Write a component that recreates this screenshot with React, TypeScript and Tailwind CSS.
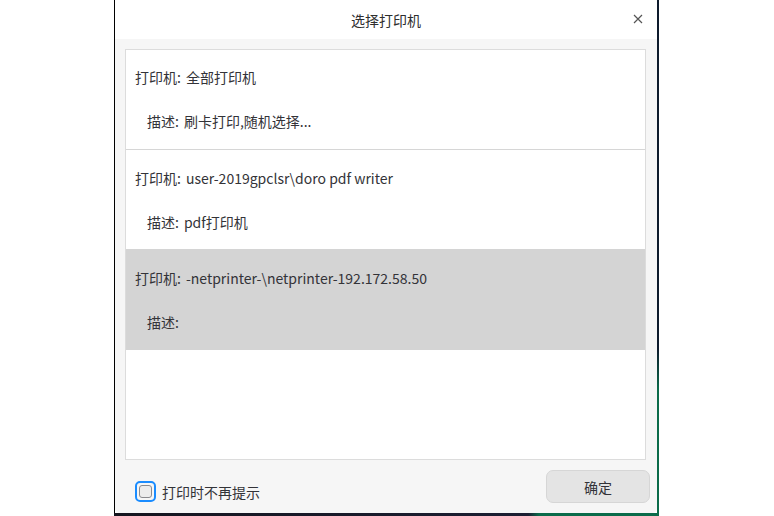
import React from "react";

const printers = [
  { name: "全部打印机", desc: "刷卡打印,随机选择..." },
  { name: "user-2019gpclsr\\doro pdf writer", desc: "pdf打印机" },
  { name: "-netprinter-\\netprinter-192.172.58.50", desc: "" },
];

export default function App() {
  const selected = 2;

  return (
    <div
      className="w-[774px] h-[516px] bg-white flex text-[14px] leading-[20px] text-[#333338]"
      style={{ fontFamily: '"Noto Sans CJK SC", "Noto Sans", sans-serif' }}
    >
      <div className="w-[114px] shrink-0" />

      {/* window frame */}
      <div className="w-[545px] h-full flex flex-col">
        <div className="flex flex-1 min-h-0">
          <div className="w-px bg-black" />

          {/* dialog */}
          <div className="flex-1 flex flex-col bg-[#f6f6f6] rounded-b-[5px] overflow-hidden">
            {/* TITLE */}
            <div className="h-[39px] bg-white flex items-center justify-center relative shrink-0">
              <span className="text-[#2e2e2e]">选择打印机</span>
              <button className="absolute right-[14px] top-[14px] w-[10px] h-[10px] flex items-center justify-center">
                <svg width="10" height="10" viewBox="0 0 10 10">
                  <path d="M1 1L9 9M9 1L1 9" stroke="#555" strokeWidth="1.2" />
                </svg>
              </button>
            </div>

            {/* LIST */}
            <div className="pt-[10px] pl-[10px] pr-[11px]">
              <div className="h-[411px] bg-white border border-[#dcdcdc] flex flex-col">
                {printers.map((p, i) => (
                  <div
                    key={i}
                    className={
                      i === selected
                        ? "h-[101px] bg-[#d4d4d4] pl-[9px] pt-[19px] flex flex-col gap-[24px]"
                        : i === 0
                        ? "h-[100px] border-b border-[#d6d6d6] pl-[9px] pt-[17px] flex flex-col gap-[24px]"
                        : "h-[99px] pl-[9px] pt-[18px] flex flex-col gap-[24px]"
                    }
                  >
                    <div className="flex">
                      <span>打印机:</span>
                      <span className="ml-[5px]">{p.name}</span>
                    </div>
                    <div className="flex pl-[12px]">
                      <span>描述:</span>
                      <span className="ml-[5px]">{p.desc}</span>
                    </div>
                  </div>
                ))}
              </div>
            </div>

            {/* FOOTER */}
            <div className="flex items-start justify-between pl-[20px] pr-[7px]">
              <label className="flex items-center mt-[21px]">
                <span className="w-[21px] h-[21px] rounded-[5px] border-2 border-[#1a8cff] flex items-center justify-center">
                  <span className="w-[13px] h-[13px] rounded-[3px] border-[1.5px] border-[#8a8a8e] bg-[#ececec]" />
                </span>
                <span className="ml-[6px]">打印时不再提示</span>
              </label>
              <button className="mt-[10px] w-[104px] h-[33px] rounded-[7px] bg-[#e4e4e4] border border-[#d6d6d6] text-[#333338]">
                确定
              </button>
            </div>
          </div>

          <div className="w-[2px] bg-[linear-gradient(to_bottom,#0e1b2d_0%,#0e1b2d_68%,#0b6b4a_76%,#0b6b4a_100%)]" />
        </div>
        <div className="h-[3px] shrink-0 bg-[linear-gradient(to_right,#15151f_0%,#1c1f33_76%,#0b6b4a_78%,#0b6b4a_100%)]" />
      </div>
    </div>
  );
}
